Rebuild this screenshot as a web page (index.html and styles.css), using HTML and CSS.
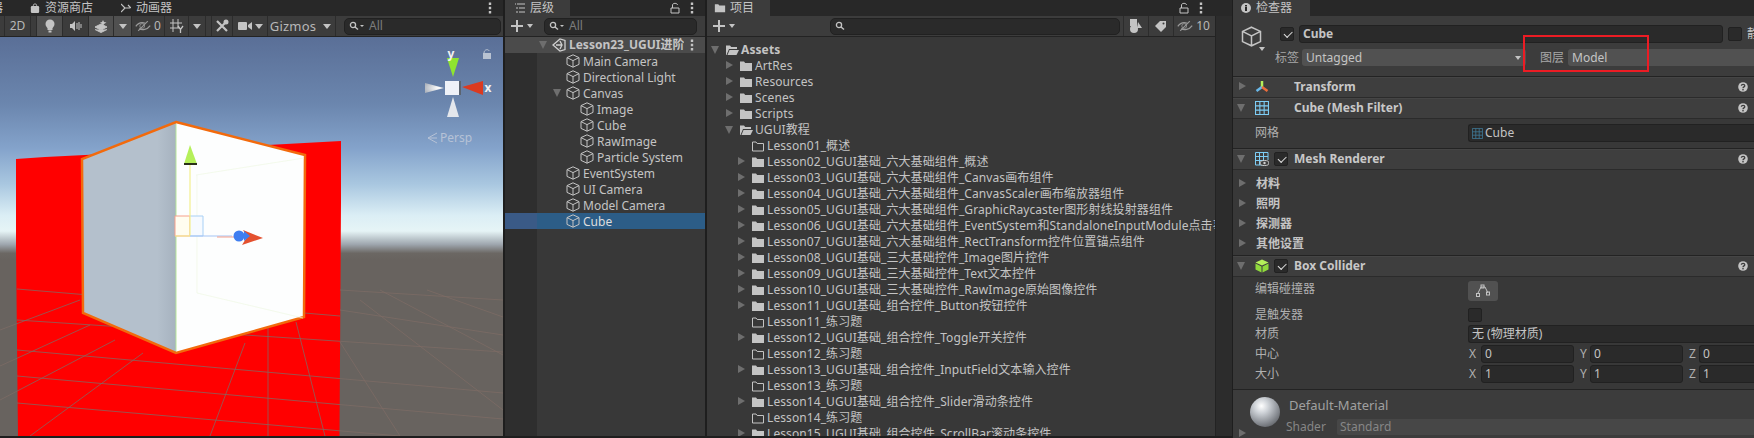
FILE: index.html
```html
<!DOCTYPE html>
<html lang="zh-CN">
<head>
  <meta charset="UTF-8" />
  <title>Unity Editor</title>
  <link rel="stylesheet" href="styles.css">
</head>
<body>

<svg class="defs" width="0" height="0">
  <symbol id="cube" viewBox="0 0 14 14"><path d="M7 .8 13 3.600V10.400L7 13.200 1 10.400V3.600ZM1 3.600 7 6.600 13 3.600M7 6.600V13.200" fill="none" stroke="currentColor"/></symbol>
  <symbol id="folder" viewBox="0 0 14 14"><path d="M1 2.500H5L6.200 4H13V12H1Z" fill="currentColor"/></symbol>
  <symbol id="folder-open" viewBox="0 0 14 14"><path d="M1 12V2.500H5L6.200 4H12V6H4L1.500 12Z" fill="currentColor"/><path d="M4.500 7H14L11.500 12H2.500Z" fill="currentColor"/></symbol>
  <symbol id="folder-empty" viewBox="0 0 14 14"><path d="M1.500 3H5L6.200 4.500H12.500V12H1.500Z" fill="none" stroke="currentColor"/></symbol>
  <symbol id="hidden" viewBox="0 0 20 14"><path d="M1 7.500C4 3 9 2 13 3.500M19 6.500C15 12 9 12.500 5 10.500" fill="none" stroke="currentColor" stroke-width="1.500"/><circle cx="9" cy="7" r="3" fill="none" stroke="currentColor"/><path d="M4 13 16 1" stroke="currentColor" stroke-width="1.300"/></symbol>
  <symbol id="help" viewBox="0 0 10 10"><circle cx="5" cy="5" r="4.800" fill="#c4c4c4"/><path d="M3.300 3.800C3.500 2 6.800 2 6.800 3.800 6.800 5 5 4.800 5 6.200" fill="none" stroke="#3c3c3c" stroke-width="1.300"/><rect x="4.300" y="7" width="1.400" height="1.400" fill="#3c3c3c"/></symbol>
  <symbol id="search" viewBox="0 0 10 10"><circle cx="4" cy="4" r="2.600" fill="none" stroke="currentColor" stroke-width="1.300"/><path d="M6 6 9 8.500" stroke="currentColor" stroke-width="1.500"/></symbol>
  <symbol id="lock" viewBox="0 0 10 12"><path d="M2.500 6V3C2.500 .8 7.500 .8 7.500 3" fill="none" stroke="currentColor"/><path d="M1 6H9V11H1Z" fill="none" stroke="currentColor"/></symbol>
  <symbol id="plus" viewBox="0 0 12 12"><path d="M6 0V12M0 6H12" stroke="currentColor" stroke-width="2"/></symbol>
  <symbol id="dots" viewBox="0 0 4 12"><path d="M.8.500H3.200V2.900H.8ZM.8 4.800H3.200V7.200H.8ZM.8 9.100H3.200V11.500H.8Z" fill="currentColor"/></symbol>
  <symbol id="mesh" viewBox="0 0 13 13"><path d="M.5.5H12.500V12.500H.5ZM4.500.5V12.500M8.500.5V12.500M.5 4.500H12.500M.5 8.500H12.500" fill="none" stroke="#7dcdf5"/></symbol>
</svg>

<div class="app">

  <section class="panel scene-panel">
    <div class="tabs">
      <span class="tab-plain cut">器</span>
      <span class="tab-plain store">
        <svg class="i10" viewBox="0 0 10 12"><path d="M3 4V2.500C3 .6 7 .6 7 2.500V4" fill="none" stroke="#c4c4c4"/><rect y="3.500" width="10" height="8.500" rx="1.500" fill="#c4c4c4"/></svg>
        资源商店
      </span>
      <span class="tab-plain animator">
        <svg class="i10" viewBox="0 0 10 10"><path d="M0 1 4 5 0 9M4 5H9M7 2 10 5" fill="none" stroke="#c4c4c4" stroke-width="1.200"/></svg>
        动画器
      </span>
      <svg class="tab-menu" viewBox="0 0 4 12"><use href="#dots"/></svg>
    </div>
    <div class="toolbar">
      <span class="tb w4"></span>
      <span class="tb w26">2D</span>
      <span class="tb w6"></span>
      <span class="tb w26 on">
        <svg class="i14" viewBox="0 0 14 14"><circle cx="7" cy="5" r="4.500" fill="#c4c4c4"/><rect x="4.500" y="9" width="5" height="2" fill="#c4c4c4"/><rect x="5.500" y="11.500" width="3" height="2" fill="#c4c4c4"/></svg>
      </span>
      <span class="tb w26">
        <svg class="i14" viewBox="0 0 14 14"><path d="M1 5H3L6 2V12L3 9H1Z" fill="#c4c4c4"/><path d="M8 4V10M10 3V11M12 5V9" stroke="#c4c4c4"/></svg>
      </span>
      <span class="tb w25 on">
        <svg class="i14" viewBox="0 0 14 14"><path d="M1 8 7 5 13 8 7 11ZM1 10.500 7 13.500 13 10.500" fill="#c4c4c4" stroke="#c4c4c4"/><path d="M9 1 10 3 12.500 3.500 10 5 9 7 8 5 6 3.500 8 3Z" fill="#c4c4c4"/></svg>
      </span>
      <span class="tb w18 on split"><i class="drop"></i></span>
      <span class="tb w33"><svg class="hide-i" viewBox="0 0 20 14"><use href="#hidden"/></svg>0</span>
      <span class="tb w24">
        <svg class="i14" viewBox="0 0 14 14"><path d="M0 4H12M0 9H9M3 0V13M8 0V9" stroke="#c4c4c4"/><path d="M8 7 10.500 10.500 13 7M10.500 10.500V14" fill="none" stroke="#c4c4c4" stroke-width="1.300"/></svg>
      </span>
      <span class="tb w17 split"><i class="drop"></i></span>
      <span class="tb w6"></span>
      <span class="tb w20">
        <svg class="i14" viewBox="0 0 14 14"><path d="M2 12 12 2M2 2 12 12" stroke="#c4c4c4" stroke-width="2.200"/><circle cx="11" cy="3" r="2.500" fill="#c4c4c4"/></svg>
      </span>
      <span class="tb w34">
        <svg class="i14" viewBox="0 0 14 14"><rect y="3" width="9" height="8" rx="1" fill="#c4c4c4"/><path d="M10 6 14 3V11L10 8Z" fill="#c4c4c4"/></svg>
        <i class="drop"></i>
      </span>
      <span class="tb w51 gizmos">Gizmos</span>
      <span class="tb w18 split"><i class="drop"></i></span>
      <label class="search scene-search">
        <svg class="i10 mag" viewBox="0 0 10 10"><use href="#search"/></svg><i class="drop tiny"></i>
        <span class="ph">All</span>
      </label>
    </div>
    <svg class="scene" viewBox="0 37 503 399" preserveAspectRatio="none">
      <defs>
        <linearGradient id="sky" x1="0" y1="37" x2="0" y2="260" gradientUnits="userSpaceOnUse">
          <stop offset="0" stop-color="#5a6f97"/>
          <stop offset=".3" stop-color="#6b86ae"/>
          <stop offset=".5" stop-color="#84a3cb"/>
          <stop offset=".66" stop-color="#a9c7e0"/>
          <stop offset=".8" stop-color="#dbeef5"/>
          <stop offset=".87" stop-color="#e6f4f6"/>
          <stop offset=".93" stop-color="#9ea6ae"/>
          <stop offset=".97" stop-color="#6b6763"/>
          <stop offset="1" stop-color="#68635f"/>
        </linearGradient>
        <linearGradient id="leftFace" x1="82" y1="0" x2="176" y2="0" gradientUnits="userSpaceOnUse">
          <stop offset="0" stop-color="#b4c0cc"/>
          <stop offset=".8" stop-color="#b4c0cc"/>
          <stop offset="1" stop-color="#a6b2bf"/>
        </linearGradient>
        <radialGradient id="wb" cx=".7" cy=".5" r=".8">
          <stop offset="0" stop-color="#fff"/>
          <stop offset="1" stop-color="#aab0ba"/>
        </radialGradient>
      </defs>
      <rect y="37" width="503" height="399" fill="url(#sky)"/>
      <polygon points="16,159 45,157 85,155 341,141 341,202 339.500,436 18,436 16,247" fill="#ff0000"/>

      <g class="grid">
        <path d="M17 289 340 316M17 320 503 352M17 350 503 393M17 376 503 419M17 403 400 436M340 290 503 300M340 310 503 335"/>
        <path d="M80 300 0 330M90 325 0 366M115 340 0 400M143 353 30 436M245 343 210 436M268 327 268 436M296 322 325 436M340 342 400 436M360 300 503 410M427 290 503 317M380 290 503 355"/>
      </g>

      <polygon points="82,159 176,122 176,353 83,313" fill="url(#leftFace)"/>
      <polygon points="176,122 305,155 304,317 176,353" fill="#fdfefe"/>
      <polygon points="176,122 305,155 304,317 176,353 83,313 82,159" fill="none" stroke="#f26a0c" stroke-width="2.500"/>
      <path d="M176 124V351" stroke="#b7e59a" stroke-width="1"/>
      <path d="M196 175 304 158M197 175V293M197 293 303 318" fill="none" stroke="#eff8e4" stroke-width=".7"/>

      <g class="move">
        <path d="M175 216H190V236H175Z" fill="#fffdf0" stroke="#f6a08c"/>
        <path d="M190 216H203V236H190" fill="#f6faff" stroke="#a8d0f5"/>
        <path d="M175 236H190" stroke="#f3ef8d"/>
        <path d="M190 164V236" stroke="#f3ef8d" stroke-width="1.200"/>
        <path d="M190 236H232" stroke="#a5c3f4" stroke-width="1.200"/>
        <path d="M217 237H238" stroke="#f6a08c"/>
        <polygon points="190,145 184,164 197,164" fill="#b5f05a"/>
        <rect x="184" y="163" width="13" height="2" fill="#2a3018"/>
        <polygon points="243,230 263,238 242,245 247,237" fill="#e4512f"/>
        <circle cx="239" cy="236" r="5.500" fill="#3f7ef0"/>
        <polygon points="244,231 250,236 244,241" fill="#3f7ef0"/>
      </g>

      <g class="orient">
        <polygon points="447,58 459,58 453,77" fill="#8fe52f"/>
        <polygon points="462,87 483,81 483,95" fill="#db3a20"/>
        <polygon points="425,83 444,88 425,93" fill="url(#wb)"/>
        <polygon points="453,97 459,117 447,117" fill="#e4e7ec"/>
        <rect x="445" y="81" width="14" height="14" fill="#eef1f8"/>
        <rect x="459" y="81" width="2" height="14" fill="#5b6470"/>
        <text x="451" y="58" class="axis" text-anchor="middle">y</text>
        <text x="488" y="92" class="axis" text-anchor="middle">x</text>
        <path d="M484 53C484 49 489 49 489 51" fill="none" stroke="#b9c3d2"/>
        <rect x="483" y="53" width="8" height="6" fill="#b9c3d2"/>
        <path d="M437 133 428 138 437 143M428 138H437" fill="none" stroke="#b6c2d6"/>
        <text x="440" y="142" class="persp">Persp</text>
      </g>
    </svg>
  </section>

  <section class="panel hier-panel">
    <div class="tabs">
      <span class="tab tab-hier">
        <svg class="i10" viewBox="0 0 10 10"><path d="M2 1H10M4 5H10M4 9H10M0 0V2M2 4V6M2 8V10" stroke="#c4c4c4"/></svg>
        层级
      </span>
      <span class="tab-tools">
        <svg class="lock-i" viewBox="0 0 10 12"><use href="#lock"/></svg>
        <svg class="tab-menu" viewBox="0 0 4 12"><use href="#dots"/></svg>
      </span>
    </div>
    <div class="toolbar small-bar">
      <svg class="plus" viewBox="0 0 12 12"><use href="#plus"/></svg><i class="drop"></i>
      <label class="search hier-search">
        <svg class="i10 mag" viewBox="0 0 10 10"><use href="#search"/></svg><i class="drop tiny"></i>
        <span class="ph">All</span>
      </label>
    </div>
    <div class="hier-list">
      <div class="h-row head lv0">
        <i class="caret open"></i>
        <svg class="ic" viewBox="0 0 14 14"><path d="M1 7 8 1 13 2.500 13 11.500 8 13ZM4 7H10M8 3 10 7 8 11" fill="none" stroke="#d0d0d0" stroke-width="1.300"/></svg>
        <span class="name">Lesson23_UGUI进阶</span>
        <svg class="row-menu" viewBox="0 0 4 12"><use href="#dots"/></svg>
      </div>
      <div class="h-row lv1"><i class="caret none"></i><svg class="ic" viewBox="0 0 14 14"><use href="#cube"/></svg><span>Main Camera</span></div>
      <div class="h-row lv1"><i class="caret none"></i><svg class="ic" viewBox="0 0 14 14"><use href="#cube"/></svg><span>Directional Light</span></div>
      <div class="h-row lv1"><i class="caret open"></i><svg class="ic" viewBox="0 0 14 14"><use href="#cube"/></svg><span>Canvas</span></div>
      <div class="h-row lv2"><i class="caret none"></i><svg class="ic" viewBox="0 0 14 14"><use href="#cube"/></svg><span>Image</span></div>
      <div class="h-row lv2"><i class="caret none"></i><svg class="ic" viewBox="0 0 14 14"><use href="#cube"/></svg><span>Cube</span></div>
      <div class="h-row lv2"><i class="caret none"></i><svg class="ic" viewBox="0 0 14 14"><use href="#cube"/></svg><span>RawImage</span></div>
      <div class="h-row lv2"><i class="caret none"></i><svg class="ic" viewBox="0 0 14 14"><use href="#cube"/></svg><span>Particle System</span></div>
      <div class="h-row lv1"><i class="caret none"></i><svg class="ic" viewBox="0 0 14 14"><use href="#cube"/></svg><span>EventSystem</span></div>
      <div class="h-row lv1"><i class="caret none"></i><svg class="ic" viewBox="0 0 14 14"><use href="#cube"/></svg><span>UI Camera</span></div>
      <div class="h-row lv1"><i class="caret none"></i><svg class="ic" viewBox="0 0 14 14"><use href="#cube"/></svg><span>Model Camera</span></div>
      <div class="h-row lv1 selected"><i class="caret none"></i><svg class="ic" viewBox="0 0 14 14"><use href="#cube"/></svg><span>Cube</span></div>
    </div>
  </section>

  <section class="panel proj-panel">
    <div class="tabs">
      <span class="tab tab-proj">
        <svg class="i12" viewBox="0 0 14 14"><use href="#folder"/></svg>
        项目
      </span>
      <span class="tab-tools tools-proj">
        <svg class="lock-i" viewBox="0 0 10 12"><use href="#lock"/></svg>
        <svg class="tab-menu" viewBox="0 0 4 12"><use href="#dots"/></svg>
      </span>
    </div>
    <div class="proj-body">
      <div class="proj-main">
        <div class="toolbar small-bar">
          <svg class="plus" viewBox="0 0 12 12"><use href="#plus"/></svg><i class="drop"></i>
          <label class="search proj-search">
            <svg class="i10 mag" viewBox="0 0 10 10"><use href="#search"/></svg>
          </label>
          <span class="tb w25 sep">
            <svg class="i14" viewBox="0 0 14 14"><rect x="1" y="0" width="7" height="7" fill="#c4c4c4"/><circle cx="5" cy="10" r="4" fill="#c4c4c4"/><path d="M9 3 13 9H8Z" fill="#c4c4c4"/></svg>
          </span>
          <span class="tb w25 sep">
            <svg class="i14" viewBox="0 0 14 14"><path d="M1 7 6 2H12V8L7 13Z" fill="#c4c4c4"/><circle cx="9.500" cy="4.500" r="1" fill="#3c3c3c"/></svg>
          </span>
          <span class="tb w40 sep"><svg class="hide-i" viewBox="0 0 20 14"><use href="#hidden"/></svg>10</span>
        </div>
        <div class="proj-list">
          <div class="p-row bold"><i class="caret open"></i><svg class="fi" viewBox="0 0 14 14"><use href="#folder-open"/></svg><span>Assets</span></div>
          <div class="p-row lv1"><i class="caret"></i><svg class="fi" viewBox="0 0 14 14"><use href="#folder"/></svg><span>ArtRes</span></div>
          <div class="p-row lv1"><i class="caret"></i><svg class="fi" viewBox="0 0 14 14"><use href="#folder"/></svg><span>Resources</span></div>
          <div class="p-row lv1"><i class="caret"></i><svg class="fi" viewBox="0 0 14 14"><use href="#folder"/></svg><span>Scenes</span></div>
          <div class="p-row lv1"><i class="caret"></i><svg class="fi" viewBox="0 0 14 14"><use href="#folder"/></svg><span>Scripts</span></div>
          <div class="p-row lv1"><i class="caret open"></i><svg class="fi" viewBox="0 0 14 14"><use href="#folder-open"/></svg><span>UGUI教程</span></div>
          <div class="p-row lv2"><i class="caret none"></i><svg class="fi" viewBox="0 0 14 14"><use href="#folder-empty"/></svg><span>Lesson01_概述</span></div>
          <div class="p-row lv2"><i class="caret"></i><svg class="fi" viewBox="0 0 14 14"><use href="#folder"/></svg><span>Lesson02_UGUI基础_六大基础组件_概述</span></div>
          <div class="p-row lv2"><i class="caret"></i><svg class="fi" viewBox="0 0 14 14"><use href="#folder"/></svg><span>Lesson03_UGUI基础_六大基础组件_Canvas画布组件</span></div>
          <div class="p-row lv2"><i class="caret"></i><svg class="fi" viewBox="0 0 14 14"><use href="#folder"/></svg><span>Lesson04_UGUI基础_六大基础组件_CanvasScaler画布缩放器组件</span></div>
          <div class="p-row lv2"><i class="caret"></i><svg class="fi" viewBox="0 0 14 14"><use href="#folder"/></svg><span>Lesson05_UGUI基础_六大基础组件_GraphicRaycaster图形射线投射器组件</span></div>
          <div class="p-row lv2"><i class="caret"></i><svg class="fi" viewBox="0 0 14 14"><use href="#folder"/></svg><span>Lesson06_UGUI基础_六大基础组件_EventSystem和StandaloneInputModule点击事件</span></div>
          <div class="p-row lv2"><i class="caret"></i><svg class="fi" viewBox="0 0 14 14"><use href="#folder"/></svg><span>Lesson07_UGUI基础_六大基础组件_RectTransform控件位置锚点组件</span></div>
          <div class="p-row lv2"><i class="caret"></i><svg class="fi" viewBox="0 0 14 14"><use href="#folder"/></svg><span>Lesson08_UGUI基础_三大基础控件_Image图片控件</span></div>
          <div class="p-row lv2"><i class="caret"></i><svg class="fi" viewBox="0 0 14 14"><use href="#folder"/></svg><span>Lesson09_UGUI基础_三大基础控件_Text文本控件</span></div>
          <div class="p-row lv2"><i class="caret"></i><svg class="fi" viewBox="0 0 14 14"><use href="#folder"/></svg><span>Lesson10_UGUI基础_三大基础控件_RawImage原始图像控件</span></div>
          <div class="p-row lv2"><i class="caret"></i><svg class="fi" viewBox="0 0 14 14"><use href="#folder"/></svg><span>Lesson11_UGUI基础_组合控件_Button按钮控件</span></div>
          <div class="p-row lv2"><i class="caret none"></i><svg class="fi" viewBox="0 0 14 14"><use href="#folder-empty"/></svg><span>Lesson11_练习题</span></div>
          <div class="p-row lv2"><i class="caret"></i><svg class="fi" viewBox="0 0 14 14"><use href="#folder"/></svg><span>Lesson12_UGUI基础_组合控件_Toggle开关控件</span></div>
          <div class="p-row lv2"><i class="caret none"></i><svg class="fi" viewBox="0 0 14 14"><use href="#folder-empty"/></svg><span>Lesson12_练习题</span></div>
          <div class="p-row lv2"><i class="caret"></i><svg class="fi" viewBox="0 0 14 14"><use href="#folder"/></svg><span>Lesson13_UGUI基础_组合控件_InputField文本输入控件</span></div>
          <div class="p-row lv2"><i class="caret none"></i><svg class="fi" viewBox="0 0 14 14"><use href="#folder-empty"/></svg><span>Lesson13_练习题</span></div>
          <div class="p-row lv2"><i class="caret"></i><svg class="fi" viewBox="0 0 14 14"><use href="#folder"/></svg><span>Lesson14_UGUI基础_组合控件_Slider滑动条控件</span></div>
          <div class="p-row lv2"><i class="caret none"></i><svg class="fi" viewBox="0 0 14 14"><use href="#folder-empty"/></svg><span>Lesson14_练习题</span></div>
          <div class="p-row lv2"><i class="caret"></i><svg class="fi" viewBox="0 0 14 14"><use href="#folder"/></svg><span>Lesson15_UGUI基础_组合控件_ScrollBar滚动条控件</span></div>
        </div>
      </div>
      <div class="scrollbar"></div>
    </div>
  </section>

  <section class="panel insp-panel">
    <div class="tabs">
      <span class="tab tab-insp">
        <svg class="i10" viewBox="0 0 10 10"><circle cx="5" cy="5" r="5" fill="#c4c4c4"/><rect x="4" y="4" width="2" height="4" fill="#282828"/><rect x="4" y="2" width="2" height="1.500" fill="#282828"/></svg>
        检查器
      </span>
    </div>
    <div class="ident">
      <div class="ident-icon">
        <svg class="big-cube" viewBox="0 0 14 14"><use href="#cube"/></svg>
        <i class="drop cube-drop"></i>
      </div>
      <div class="ident-fields">
        <div class="name-row">
          <span class="check on"></span>
          <span class="field name-field">Cube</span>
          <span class="check"></span>
          <span class="static">静态的</span>
        </div>
        <div class="tag-row">
          <span class="tag-label">标签</span>
          <span class="select tag-select">Untagged<i class="drop"></i></span>
          <span class="tag-label layer-label">图层</span>
          <span class="select layer-select">Model</span>
        </div>
      </div>
    </div>

    <div class="comp-head">
      <i class="caret"></i>
      <svg class="comp-ic" viewBox="0 0 14 14"><path d="M7 1V7" stroke="#b5f05a" stroke-width="2.500"/><path d="M7 7 1.500 11" stroke="#6ab9ea" stroke-width="2.500"/><path d="M7 7 12.500 11" stroke="#ec6c3c" stroke-width="2.500"/></svg>
      <span class="comp-gap"></span>
      <span class="comp-title">Transform</span>
      <svg class="help" viewBox="0 0 10 10"><use href="#help"/></svg>
    </div>
    <div class="comp-head">
      <i class="caret open"></i>
      <svg class="comp-ic" viewBox="0 0 13 13"><use href="#mesh"/></svg>
      <span class="comp-gap"></span>
      <span class="comp-title">Cube (Mesh Filter)</span>
      <svg class="help" viewBox="0 0 10 10"><use href="#help"/></svg>
    </div>
    <div class="comp-body mesh-body">
      <div class="prop">
        <span class="prop-label">网格</span>
        <span class="field value"><svg class="mini-mesh" viewBox="0 0 13 13"><path d="M.5.5H12.500V12.500H.5ZM4.500.5V12.500M8.500.5V12.500M.5 4.500H12.500M.5 8.500H12.500" fill="none" stroke="#3f7896"/></svg>Cube</span>
      </div>
    </div>
    <div class="comp-head">
      <i class="caret open"></i>
      <svg class="comp-ic" viewBox="0 0 14 14"><path d="M9 13H.5V.5H13V8M4.500.5V13M8.500.5V8M.5 4.500H13M.5 8.500H9" fill="none" stroke="#7dcdf5"/><ellipse cx="9.500" cy="11" rx="4.500" ry="2.500" fill="#3e3e3e" stroke="#d0d0d0"/><circle cx="9.500" cy="11" r="1.200" fill="#d0d0d0"/></svg>
      <span class="check on comp-check"></span>
      <span class="comp-title">Mesh Renderer</span>
      <svg class="help" viewBox="0 0 10 10"><use href="#help"/></svg>
    </div>
    <div class="comp-body fold-body">
      <div class="fold"><i class="caret"></i>材料</div>
      <div class="fold"><i class="caret"></i>照明</div>
      <div class="fold"><i class="caret"></i>探测器</div>
      <div class="fold"><i class="caret"></i>其他设置</div>
    </div>
    <div class="comp-head">
      <i class="caret open"></i>
      <svg class="comp-ic" viewBox="0 0 14 14"><path d="M7 .5 13.500 3.500 7 6.500 .5 3.500Z" fill="#b5f05a"/><path d="M.5 4.500 6.500 7.500V13.500L.5 10.500ZM13.500 4.500 7.500 7.500V13.500L13.500 10.500Z" fill="#8fd93c"/></svg>
      <span class="check on comp-check"></span>
      <span class="comp-title">Box Collider</span>
      <svg class="help" viewBox="0 0 10 10"><use href="#help"/></svg>
    </div>
    <div class="comp-body box-body">
      <div class="prop tall">
        <span class="prop-label">编辑碰撞器</span>
        <span class="edit-btn"><svg class="i14" viewBox="0 0 14 14"><path d="M2 9 5 3H9L12 9" fill="none" stroke="#c4c4c4"/><rect x=".5" y="9.500" width="3" height="3" fill="none" stroke="#c4c4c4"/><rect x="10.500" y="8" width="3" height="3" fill="none" stroke="#c4c4c4"/><rect x="5" y="1" width="3" height="3" fill="none" stroke="#c4c4c4"/></svg></span>
      </div>
      <div class="prop mid">
        <span class="prop-label">是触发器</span>
        <span class="check"></span>
      </div>
      <div class="prop">
        <span class="prop-label">材质</span>
        <span class="field value">无 (物理材质)</span>
      </div>
      <div class="prop">
        <span class="prop-label">中心</span>
        <span class="vec"><b>X</b><span class="field num">0</span><b>Y</b><span class="field num">0</span><b>Z</b><span class="field num last">0</span></span>
      </div>
      <div class="prop">
        <span class="prop-label">大小</span>
        <span class="vec"><b>X</b><span class="field num">1</span><b>Y</b><span class="field num">1</span><b>Z</b><span class="field num last">1</span></span>
      </div>
    </div>
    <div class="material">
      <i class="caret mat-caret"></i>
      <div class="sphere"></div>
      <div class="mat-text">
        <div class="mat-name">Default-Material</div>
        <div class="mat-shader"><span class="shader-label">Shader</span><span class="shader-value">Standard</span></div>
      </div>
    </div>
    <div class="layer-mark"></div>
  </section>

</div>

</body>
</html>
```

FILE: styles.css
```css
* {
  box-sizing: border-box;
}
html, body {
  margin: 0;
  height: 100%;
  overflow: hidden;
  background: #1e1e1e;
}
body {
  font-family: "Noto Sans", "Noto Sans CJK SC", sans-serif;
  font-size: 12px;
  line-height: 16px;
  color: #c4c4c4;
}
.defs {
  position: absolute;
}
.app {
  display: flex;
  height: 436px;
}
.panel {
  display: flex;
  flex-direction: column;
  flex-shrink: 0;
  overflow: hidden;
  background: #383838;
}
.scene-panel { width: 503px; }
.hier-panel { width: 200px; margin-left: 2px; }
.proj-panel { width: 525px; margin-left: 2px; }
.insp-panel { width: 521px; margin-left: 1px; position: relative; height: 438px; background: #3c3c3c; }

/* tabs */
.tabs {
  display: flex;
  align-items: center;
  flex: 0 0 16px;
  height: 16px;
  background: #282828;
  white-space: nowrap;
}
.tab, .tab-plain {
  display: flex;
  align-items: center;
  height: 16px;
  gap: 5px;
  font-size: 12px;
}
.tab { background: #3c3c3c; }
.tab-hier { width: 65px; padding-left: 10px; }
.tab-proj { width: 63px; padding-left: 7px; gap: 4px; }
.tab-proj svg { color: #c4c4c4; }
.tab-insp { width: 77px; padding-left: 8px; gap: 5px; font-size: 12px; }
.cut { width: 39px; margin-left: -9px; }
.store { width: 91px; }
.animator { gap: 5px; }
.tab-menu {
  flex: none;
  width: 4px;
  height: 12px;
  color: #c4c4c4;
}
.scene-panel .tab-menu { margin-left: auto; margin-right: 11px; }
.tab-tools {
  display: flex;
  align-items: center;
  gap: 10px;
  margin-left: auto;
  margin-right: 11px;
}
.tools-proj { margin-right: 29px; }
.lock-i { width: 10px; height: 12px; color: #c4c4c4; }
.i10 { width: 10px; height: 10px; flex: none; }
.i12 { width: 12px; height: 12px; flex: none; }
.i14 { width: 14px; height: 14px; flex: none; }

/* toolbars */
.toolbar {
  display: flex;
  align-items: stretch;
  flex: 0 0 21px;
  height: 21px;
  background: #3c3c3c;
  border-bottom: 1px solid #232323;
}
.tb {
  display: flex;
  align-items: center;
  justify-content: center;
  gap: 3px;
  flex: none;
  border-right: 1px solid #2c2c2c;
  color: #b8b8b8;
  font-size: 12px;
}
.tb.on { background: #505050; }
.w4 { width: 5px; }
.w6 { width: 6px; }
.w17 { width: 17px; }
.w18 { width: 18px; }
.w20 { width: 21px; }
.w24 { width: 24px; }
.w25 { width: 25px; }
.w26 { width: 26px; }
.w33 { width: 33px; }
.w34 { width: 35px; }
.w40 { width: 41px; }
.w51 { width: 50px; }
.split { position: relative; }
.gizmos { font-size: 13px; border-right: 0; letter-spacing: .2px; }
.hide-i { width: 16px; height: 12px; color: #9a9a9a; }
.drop {
  display: inline-block;
  width: 0;
  height: 0;
  border-left: 4px solid transparent;
  border-right: 4px solid transparent;
  border-top: 5px solid #c4c4c4;
  flex: none;
}
.drop.tiny {
  border-left-width: 2px;
  border-right-width: 2px;
  border-top-width: 2px;
  margin-left: 1px;
}
.search {
  display: flex;
  align-items: center;
  height: 17px;
  align-self: center;
  background: #2a2a2a;
  border: 1px solid #212121;
  border-radius: 5px;
  padding-left: 4px;
}
.mag { color: #c4c4c4; }
.ph {
  margin-left: 5px;
  color: #7c7c7c;
}
.scene-search { width: 157px; margin-left: 8px; }
.hier-search { width: 153px; margin-left: 11px; }
.proj-search { width: 290px; margin-left: 95px; margin-right: 3px; }
.small-bar { align-items: center; }
.plus {
  width: 12px;
  height: 12px;
  margin-left: 6px;
  margin-right: 4px;
  color: #c4c4c4;
  flex: none;
}
.small-bar > .drop {
  border-left-width: 3.500px;
  border-right-width: 3.500px;
  border-top-width: 4px;
}
.small-bar .tb { height: 20px; border-right: 0; border-left: 1px solid #2c2c2c; }
.small-bar .w40 { width: 40px; }

/* scene */
.scene {
  display: block;
  flex: 1;
  width: 503px;
  min-height: 0;
}
.grid path {
  fill: none;
  stroke: #7e6c66;
  stroke-opacity: .75;
  stroke-width: 1;
}
.axis {
  font-family: "Noto Sans", sans-serif;
  font-size: 12px;
  font-weight: 700;
  fill: #f2f2f2;
}
.persp {
  font-family: "Noto Sans", sans-serif;
  font-size: 12px;
  fill: #b6c2d6;
}

/* hierarchy */
.hier-list {
  flex: 1;
  background: linear-gradient(to right, #2e2e2e 32px, #383838 32px);
}
.h-row {
  display: flex;
  align-items: center;
  height: 16px;
  white-space: nowrap;
}
.h-row.lv0 { padding-left: 33px; }
.h-row.lv1 { padding-left: 47px; }
.h-row.lv2 { padding-left: 61px; }
.h-row.lv1 > span,
.h-row.lv2 > span { padding-top: 2px; }
.head {
  background: #4b4b4b;
  font-weight: 700;
}
.head .name {
  width: 115px;
  overflow: hidden;
}
.row-menu {
  flex: none;
  width: 4px;
  height: 12px;
  margin-left: auto;
  margin-right: 11px;
  color: #c4c4c4;
}
.selected {
  background: linear-gradient(to right, #3a5a86 32px, #2c5d87 32px);
  color: #dedede;
}
.ic {
  width: 14px;
  height: 14px;
  flex: none;
  margin-right: 3px;
  color: #c4c4c4;
}
.caret {
  display: inline-block;
  position: relative;
  flex: 0 0 14px;
  width: 14px;
  height: 16px;
}
.caret::after {
  content: "";
  position: absolute;
  left: 3px;
  top: 3px;
  width: 0;
  height: 0;
  border-left: 7px solid #6e6e6e;
  border-top: 4.500px solid transparent;
  border-bottom: 4.500px solid transparent;
}
.caret.open::after {
  left: 1px;
  top: 4px;
  border-left: 4.500px solid transparent;
  border-right: 4.500px solid transparent;
  border-top: 8px solid #6e6e6e;
  border-bottom: 0;
}
.caret.none::after {
  display: none;
}

/* project */
.proj-body {
  display: flex;
  flex: 1;
  min-height: 0;
}
.proj-main {
  display: flex;
  flex-direction: column;
  width: 508px;
}
.proj-list {
  flex: 1;
  overflow: hidden;
  padding-top: 5px;
}
.scrollbar {
  flex: 1;
  background: #2c2c2c;
  border-left: 1px solid #232323;
}
.p-row {
  display: flex;
  align-items: center;
  height: 16px;
  padding-left: 4px;
  white-space: nowrap;
  letter-spacing: .09px;
}
.p-row.lv1 { padding-left: 18px; }
.p-row.lv2 { padding-left: 30px; }
.p-row .caret::after { left: 1px; }
.p-row .caret.open::after { left: 0; }
.p-row.bold { font-weight: 700; }
.fi {
  width: 14px;
  height: 14px;
  flex: none;
  margin-right: 2px;
  color: #c4c4c4;
}

/* inspector */
.insp-panel .tabs { flex-basis: 16px; }
.ident {
  display: flex;
  flex: 0 0 61px;
  border-bottom: 1px solid #232323;
}
.ident-icon {
  position: relative;
  width: 42px;
  padding: 10px 0 0 8px;
}
.big-cube {
  width: 21px;
  height: 21px;
  color: #c4c4c4;
}
.cube-drop {
  position: absolute;
  left: 26px;
  top: 31px;
  border-left-width: 3.500px;
  border-right-width: 3.500px;
  border-top-width: 4px;
}
.ident-fields {
  flex: 1;
  min-width: 0;
}
.name-row {
  display: flex;
  align-items: center;
  height: 18px;
  margin-top: 9px;
  margin-left: 5px;
  gap: 5px;
}
.check {
  position: relative;
  flex: none;
  width: 14px;
  height: 14px;
  background: #2a2a2a;
  border: 1px solid #212121;
  border-radius: 2px;
}
.check.on::after {
  content: "";
  position: absolute;
  left: 2.500px;
  top: 2.500px;
  width: 7px;
  height: 3.500px;
  border-left: 1.500px solid #dedede;
  border-bottom: 1.500px solid #dedede;
  transform: rotate(-45deg);
}
.field {
  display: flex;
  align-items: center;
  height: 18px;
  background: #2a2a2a;
  border: 1px solid #212121;
  border-radius: 3px;
  padding-left: 3px;
  color: #c4c4c4;
}
.name-field {
  width: 424px;
  flex: none;
  font-weight: 700;
}
.static { white-space: nowrap; }
.tag-row {
  display: flex;
  align-items: center;
  height: 17px;
  margin-top: 6px;
  white-space: nowrap;
}
.tag-label {
  width: 27px;
  flex: none;
  color: #a8a8a8;
}
.layer-label {
  width: 28px;
  margin-left: 14px;
}
.select {
  display: flex;
  align-items: center;
  flex: none;
  height: 17px;
  background: #515151;
  border-radius: 3px;
  padding-left: 4px;
}
.tag-select {
  width: 224px;
  justify-content: space-between;
  padding-right: 5px;
}
.tag-select .drop { border-left-width: 3.500px; border-right-width: 3.500px; border-top-width: 4px; }
.layer-select { width: 190px; }

.comp-head {
  display: flex;
  align-items: center;
  flex: 0 0 21px;
  padding-left: 3px;
  background: #3e3e3e;
  border-bottom: 1px solid #2b2b2b;
  box-shadow: inset 0 1px 0 #454545;
}
.comp-ic {
  width: 14px;
  height: 14px;
  flex: none;
  margin-left: 5px;
}
.comp-gap { width: 25px; flex: none; }
.comp-check { margin-left: 5px; margin-right: 6px; }
.comp-title {
  font-weight: 700;
  color: #c8c8c8;
}
.help {
  width: 10px;
  height: 10px;
  margin-left: auto;
  margin-right: 6px;
}
.comp-body {
  background: #383838;
  border-bottom: 1px solid #232323;
  flex: none;
}
.mesh-body {
  height: 30px;
  padding-top: 4px;
}
.fold-body {
  height: 86px;
  padding-top: 4px;
}
.box-body {
  height: 113px;
  padding-top: 4px;
}
.fold {
  display: flex;
  align-items: center;
  height: 20px;
  padding-left: 3px;
  font-weight: 700;
}
.fold .caret { flex: 0 0 20px; width: 20px; }
.prop {
  display: flex;
  align-items: center;
  height: 20px;
  padding-left: 22px;
}
.prop.tall { height: 25px; align-items: flex-start; }
.prop.mid { height: 18px; }
.prop-label {
  width: 213px;
  flex: none;
  color: #b0b0b0;
}
.value {
  flex: 1;
  border-right: 0;
  border-radius: 3px 0 0 3px;
}
.mini-mesh {
  width: 11px;
  height: 11px;
  margin-right: 2px;
}
.edit-btn {
  display: flex;
  align-items: center;
  justify-content: center;
  width: 30px;
  height: 20px;
  background: #515151;
  border-radius: 3px;
}
.vec {
  display: flex;
  align-items: center;
  flex: 1;
  margin-left: 1px;
}
.vec b {
  font-weight: 400;
  width: 12px;
  color: #b0b0b0;
}
.vec b:not(:first-child) { width: 16px; padding-left: 6px; }
.num {
  width: 93px;
  flex: none;
}
.num.last {
  width: 60px;
  border-right: 0;
}
.material {
  display: flex;
  position: relative;
  flex: 1;
  padding-left: 17px;
  padding-top: 7px;
  background: #3c3c3c;
}
.sphere {
  width: 30px;
  height: 30px;
  border-radius: 50%;
  flex: none;
  background: radial-gradient(circle at 38% 30%, #ffffff 0, #cfd3d8 25%, #8b8f95 60%, #3e4044 100%);
}
.mat-caret {
  position: absolute;
  left: 3px;
  top: 36px;
}
.mat-text { margin-left: 9px; color: #a0a0a0; }
.mat-name { height: 16px; margin-bottom: 6px; font-size: 13px; }
.mat-shader {
  display: flex;
  align-items: center;
  margin-left: -3px;
  color: #868686;
}
.shader-label { width: 51px; }
.shader-value {
  display: block;
  width: 420px;
  height: 16px;
  padding-left: 3px;
  background: #474747;
  border-radius: 2px;
}
.layer-mark {
  position: absolute;
  left: 290px;
  top: 35px;
  width: 126px;
  height: 37px;
  border: 2px solid #ec1c24;
}
```
